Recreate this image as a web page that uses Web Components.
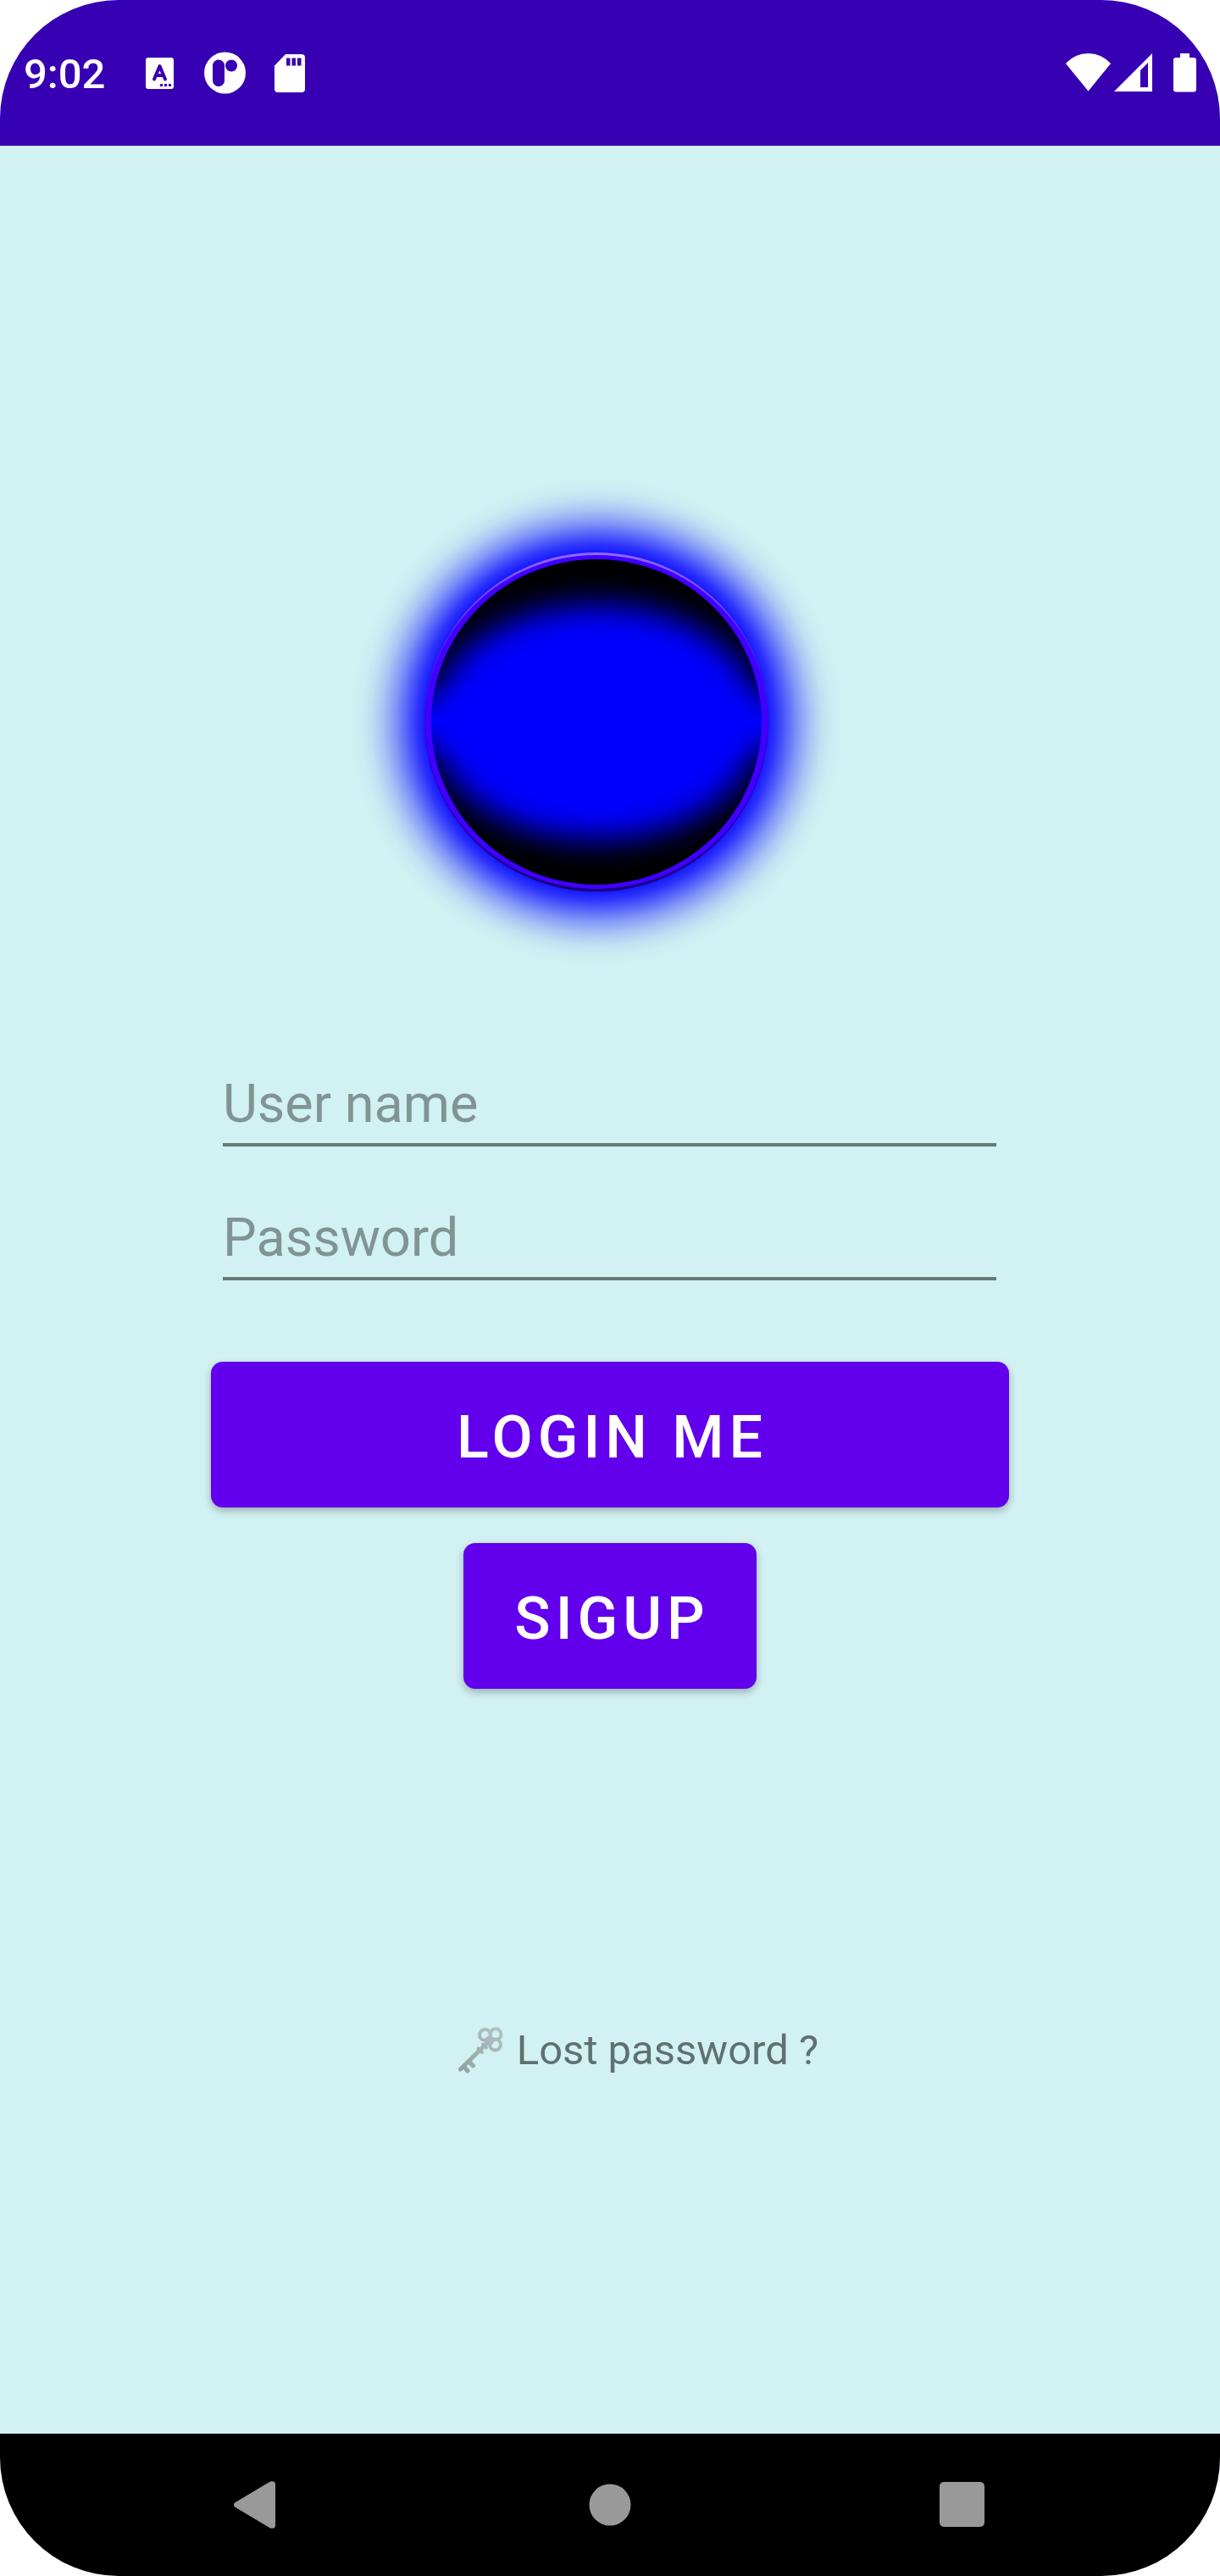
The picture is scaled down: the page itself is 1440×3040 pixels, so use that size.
<!DOCTYPE html>
<html lang="en">
<head>
<meta charset="utf-8">
<meta name="viewport" content="width=device-width, initial-scale=1">
<title>Login</title>
<style>
  html, body { margin: 0; background: #fff; }
  body { font-family: Roboto, "Liberation Sans", sans-serif; }
</style>
</head>
<body>
<phone-screen>
  <status-bar slot="status" time="9:02"></status-bar>
  <login-form></login-form>
  <nav-bar slot="nav"></nav-bar>
</phone-screen>

<script>
const define = (name, html, setup) => {
  const template = document.createElement('template');
  template.innerHTML = html;
  customElements.define(name, class extends HTMLElement {
    constructor() {
      super();
      this.attachShadow({ mode: 'open' }).append(template.content.cloneNode(true));
    }
    connectedCallback() { if (setup) setup(this, this.shadowRoot); }
  });
};

define('phone-screen', `
  <style>
    :host { display: flex; flex-direction: column; min-height: 100vh; border-radius: 140px;
            overflow: hidden; background: #d2f1f2; }
    main { flex: 1; display: flex; flex-direction: column; }
  </style>
  <slot name="status"></slot>
  <main><slot></slot></main>
  <slot name="nav"></slot>
`);

define('status-bar', `
  <style>
    :host { display: flex; justify-content: space-between; align-items: center; height: 172px;
            padding: 0 24px 0 28px; background: #3700b3; color: #fff; box-sizing: border-box; }
    .left, .right { display: flex; align-items: center; }
    time { font-size: 49px; line-height: 60px; font-weight: 500; padding-top: 4px; margin-right: 42px; }
    svg { display: block; fill: #fff; }
    .left svg + svg { margin-left: 20px; }
  </style>
  <div class="left">
    <time></time>
    <svg width="50" height="56" viewBox="0 0 50 56">
      <rect x="6" y="10" width="33" height="37" rx="3"/>
      <path d="M16 35.500L22.500 20L29 35.500M18.500 31H26.500" fill="none" stroke="#3700b3" stroke-width="4" stroke-linecap="round" stroke-linejoin="round"/>
      <g fill="#3700b3"><circle cx="24.500" cy="42.500" r="1.800"/><circle cx="29.500" cy="42.500" r="1.800"/><circle cx="34.500" cy="42.500" r="1.800"/></g>
    </svg>
    <svg width="56" height="56" viewBox="0 0 56 56">
      <circle cx="29.500" cy="28" r="24.500"/>
      <rect x="15" y="12.500" width="14" height="31.500" rx="7" fill="#3700b3"/>
      <circle cx="37" cy="19.500" r="7" fill="#3700b3"/>
    </svg>
    <svg width="56" height="56" viewBox="0 0 56 56">
      <path d="M12 19.500L25 6H44Q48 6 48 10V47Q48 51 44 51H16Q12 51 12 47Z"/>
      <path d="M26 10.500h4.500v9H26zM32.500 10.500h4.500v9h-4.500zM39 10.500h4.500v9H39z" fill="#3700b3"/>
    </svg>
  </div>
  <div class="right">
    <svg width="57" height="56" viewBox="0 0 57 56"><path d="M0 17Q11 5 26.500 5T53 17L26.500 49.500Z"/></svg>
    <svg width="57" height="56" viewBox="0 0 57 56"><path fill-rule="evenodd" d="M0 50L45 5V50ZM31 25V45H40V16Z"/></svg>
    <svg width="44" height="56" viewBox="0 0 44 56"><path d="M21 5H32V10H37Q40 10 40 13V47.500Q40 50.500 37 50.500H16Q13 50.500 13 47.500V13Q13 10 16 10H21Z"/></svg>
  </div>
`, (el, root) => { root.querySelector('time').textContent = el.getAttribute('time'); });

define('glow-orb', `
  <style>
    :host { display: block; }
    svg { display: block; max-width: 100%; overflow: visible; }
  </style>
  <svg width="600" height="600" viewBox="0 0 600 600" aria-hidden="true">
    <defs>
      <radialGradient id="glow">
        <stop offset=".694" stop-color="#00f" stop-opacity=".9"/>
        <stop offset=".729" stop-color="#00f" stop-opacity=".78"/>
        <stop offset=".764" stop-color="#00f" stop-opacity=".62"/>
        <stop offset=".816" stop-color="#00f" stop-opacity=".38"/>
        <stop offset=".868" stop-color="#00f" stop-opacity=".19"/>
        <stop offset=".917" stop-color="#00f" stop-opacity=".07"/>
        <stop offset=".958" stop-color="#00f" stop-opacity=".02"/>
        <stop offset="1" stop-color="#00f" stop-opacity="0"/>
      </radialGradient>
      <filter id="shade" x="-20%" y="-20%" width="140%" height="140%" color-interpolation-filters="sRGB"><feGaussianBlur stdDeviation="19"/></filter>
      <linearGradient id="rim" x1="0" y1="0" x2="0" y2="1">
        <stop offset="0" stop-color="#9468ff"/><stop offset=".25" stop-color="#5a1cff"/>
        <stop offset=".5" stop-color="#3800dc"/><stop offset=".8" stop-color="#2800b4"/><stop offset="1" stop-color="#180070"/>
      </linearGradient>
      <linearGradient id="band" gradientUnits="userSpaceOnUse" x1="0" y1="250" x2="0" y2="350">
        <stop offset="0" stop-color="#fff"/><stop offset=".5" stop-color="#000"/><stop offset="1" stop-color="#fff"/>
      </linearGradient>
      <mask id="sides" maskUnits="userSpaceOnUse" x="0" y="0" width="600" height="600"><rect width="600" height="600" fill="url(#band)"/></mask>
      <clipPath id="disc"><ellipse cx="284" cy="300" rx="195" ry="192"/></clipPath>
    </defs>
    <ellipse cx="284" cy="300" rx="291" ry="288" fill="url(#glow)"/>
    <ellipse cx="284" cy="300" rx="203" ry="200" fill="url(#rim)"/>
    <ellipse cx="284" cy="300" rx="202" ry="197" fill="#4000ff"/>
    <ellipse cx="284" cy="300" rx="195" ry="192" fill="#00f"/>
    <g clip-path="url(#disc)"><g mask="url(#sides)">
      <path filter="url(#shade)" fill-rule="evenodd" d="M-16 0H584V600H-16ZM89 300a195 139 0 0 0 390 0a195 139 0 0 0 -390 0Z"/>
    </g></g>
  </svg>
`);

define('text-field', `
  <style>
    :host { display: block; padding: 0 15px 0 14px; }
    input { display: block; width: 100%; height: 98px; box-sizing: border-box; margin: 0; padding: 0;
            border: 0; border-bottom: 4px solid #667979; border-radius: 0; outline: 0; background: none;
            font: 400 63px/74px Roboto, sans-serif; color: #212121; }
    input::placeholder { color: #809494; opacity: 1; }
  </style>
  <input>
`, (el, root) => {
  const input = root.querySelector('input');
  input.type = el.getAttribute('type') || 'text';
  input.placeholder = el.getAttribute('label');
  input.setAttribute('aria-label', el.getAttribute('label'));
});

define('raised-button', `
  <style>
    :host { display: block; }
    button { display: block; width: 100%; height: 172px; box-sizing: border-box; margin: 0; padding: 6px 55px 0 60px;
             border: 0; border-radius: 14px; background: #6200ee; color: #fff;
             font: 500 70px/82px Roboto, sans-serif; letter-spacing: 6px; white-space: nowrap;
             box-shadow: 0 4px 10px rgba(0, 0, 0, .27); }
  </style>
  <button type="button"><slot></slot></button>
`);

define('lost-password', `
  <style>
    :host { display: block; }
    a { display: flex; align-items: center; gap: 14px; color: #5f7070; text-decoration: none;
        font-size: 49px; line-height: 56px; white-space: nowrap; }
    svg { display: block; }
    span { padding-top: 2px; }
  </style>
  <a href="#lost">
    <svg width="56" height="56" viewBox="0 0 56 56" aria-hidden="true">
      <defs><linearGradient id="metal" gradientUnits="userSpaceOnUse" x1="48" y1="4" x2="6" y2="54">
        <stop offset="0" stop-color="#b0c1c2"/><stop offset="1" stop-color="#94a3a4"/></linearGradient></defs>
      <g fill="none" stroke="url(#metal)" stroke-width="4" stroke-linecap="round">
        <circle cx="32.500" cy="10.500" r="6.500"/><circle cx="45" cy="9.700" r="6.500"/><circle cx="44.500" cy="22" r="6.500"/>
        <path d="M38 17L3.500 51" stroke-width="5"/>
        <path d="M36 16L39 19" stroke-width="7"/>
        <path d="M30 21.500L34 25.500M24.500 26.500L29 31" stroke-width="4"/>
        <path d="M7 47.500L12 53M13.500 41.500L18.500 47" stroke-width="5"/>
      </g>
    </svg>
    <span><slot></slot></span>
  </a>
`);

define('login-form', `
  <style>
    :host { display: flex; flex-direction: column; align-items: center; padding: 380px 24px 0; }
    form { display: flex; flex-direction: column; width: 100%; max-width: 942px; margin-top: 103px; }
    .fields { display: flex; flex-direction: column; gap: 60px; }
    .actions { display: flex; flex-direction: column; gap: 42px; margin-top: 96px; }
    .second { align-self: center; }
    lost-password { margin-top: 397px; padding-left: 66px; }
  </style>
  <glow-orb></glow-orb>
  <form>
    <div class="fields">
      <text-field label="User name"></text-field>
      <text-field label="Password" type="password"></text-field>
    </div>
    <div class="actions">
      <raised-button>LOGIN ME</raised-button>
      <raised-button class="second">SIGUP</raised-button>
    </div>
  </form>
  <lost-password>Lost password ?</lost-password>
`);

define('nav-bar', `
  <style>
    :host { display: grid; grid-template-columns: repeat(3, 1fr); height: 168px; padding: 0 96px;
            box-sizing: border-box; background: #000; }
    button { display: flex; align-items: center; justify-content: center; margin: 0; padding: 0; border: 0; background: none; }
    svg { display: block; fill: #999; }
  </style>
  <button type="button" aria-label="Back"><svg width="64" height="64" viewBox="0 0 64 64"><path d="M5 29.500L47 4.500Q53 3 53 8V56Q53 61 47 59.500L5 34.500Q3 32 5 29.500Z"/></svg></button>
  <button type="button" aria-label="Home"><svg width="64" height="64" viewBox="0 0 64 64"><circle cx="32" cy="32" r="24.500"/></svg></button>
  <button type="button" aria-label="Recent apps"><svg width="64" height="64" viewBox="0 0 64 64"><rect x="5" y="5" width="53" height="53" rx="5"/></svg></button>
`);
</script>
</body>
</html>
